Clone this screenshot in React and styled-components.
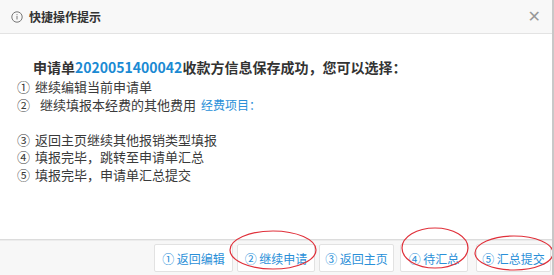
import React from 'react';
import styled, { createGlobalStyle } from 'styled-components';

const Global = createGlobalStyle`
  html, body { margin: 0; padding: 0; background: #fff; }
  body { font-family: "Microsoft YaHei", "Noto Sans CJK SC", "Noto Sans", sans-serif; }
`;

const Dialog = styled.div`
  position: relative;
  width: 554px;
  height: 275px;
  box-sizing: border-box;
  border-right: 2px solid #c8c8c8;
  display: flex;
  flex-direction: column;
  background: #fff;
  overflow: hidden;
`;

const Header = styled.div`
  height: 33px;
  flex: none;
  background: #f8f8f8;
  border-bottom: 1px solid #e3e3e3;
  display: flex;
  align-items: center;
  padding: 0 10px 0 11px;
  color: #333;
`;

const Title = styled.span`
  font-size: 12px;
  font-weight: bold;
  margin-left: 6px;
  flex: 1;
`;

const Close = styled.span`
  color: #999;
  font-size: 16px;
  font-family: "DejaVu Sans", sans-serif;
  line-height: 1;
  margin-right: 1px;
`;

const Body = styled.div`
  flex: 1;
  padding: 24px 0 0 17px;
  color: #3a3a3a;
`;

const Lead = styled.div`
  font-size: 14px;
  font-weight: bold;
  line-height: 19px;
  padding-left: 16px;
  margin-bottom: 1px;
  color: #333;
`;

const Num = styled.span`
  color: #1b8ad3;
`;

const Item = styled.div`
  font-size: 13px;
  line-height: 17.5px;
  height: 17.5px;
  display: flex;
  align-items: center;
`;

const Mark = styled.span`
  width: ${p => (p.$wide ? 23 : 18)}px;
  flex: none;
`;

const Link = styled.span`
  color: #2a90d8;
  font-size: 12px;
  margin-left: 5px;
`;

const Footer = styled.div`
  height: 32px;
  flex: none;
  border-top: 1px solid #dcdcdc;
  box-shadow: inset 0 1px 0 #ececec;
  background: #f7f7f7;
  display: flex;
  justify-content: flex-end;
  align-items: flex-end;
  padding: 0 1px 3px 0;
`;

const Button = styled.button`
  width: ${p => p.$w}px;
  margin-left: ${p => p.$gap}px;
  height: 28px;
  padding: 0;
  border: 1px solid #e2e2e2;
  background: #fff;
  color: #2a8fd8;
  font-family: inherit;
  font-size: 12px;
  border-radius: 2px;
  cursor: pointer;
`;

const Overlay = styled.svg`
  position: absolute;
  left: 0;
  top: 0;
  pointer-events: none;
`;

const InfoIcon = () => (
  <svg width="12" height="12" viewBox="0 0 12 12">
    <circle cx="6" cy="6" r="5.2" fill="none" stroke="#777" strokeWidth="1" />
    <rect x="5.5" y="5" width="1" height="3.5" fill="#777" />
    <rect x="5.5" y="3.2" width="1" height="1" fill="#777" />
  </svg>
);

const actions = [
  { label: '① 返回编辑', w: 79, gap: 0 },
  { label: '② 继续申请', w: 78, gap: 4 },
  { label: '③ 返回主页', w: 75, gap: 4 },
  { label: '④ 待汇总', w: 68, gap: 6 },
  { label: '⑤ 汇总提交', w: 75, gap: 8 },
];

export default function App() {
  return (
    <>
      <Global />
      <Dialog>
        <Header>
          <InfoIcon />
          <Title>快捷操作提示</Title>
          <Close>✕</Close>
        </Header>
        <Body>
          <Lead>
            申请单<Num>2020051400042</Num>收款方信息保存成功，您可以选择：
          </Lead>
          <Item><Mark>①</Mark>继续编辑当前申请单</Item>
          <Item><Mark $wide>②</Mark>继续填报本经费的其他费用<Link>经费项目：</Link></Item>
          <Item />
          <Item><Mark>③</Mark>返回主页继续其他报销类型填报</Item>
          <Item><Mark>④</Mark>填报完毕，跳转至申请单汇总</Item>
          <Item><Mark>⑤</Mark>填报完毕，申请单汇总提交</Item>
        </Body>
        <Footer>
          {actions.map(a => (
            <Button key={a.label} $w={a.w} $gap={a.gap}>{a.label}</Button>
          ))}
        </Footer>
        <Overlay width="554" height="275">
          <ellipse cx="273" cy="250" rx="43" ry="19" fill="none" stroke="#e0303a" strokeWidth="1.2" />
          <ellipse cx="435" cy="248" rx="33" ry="20" fill="none" stroke="#e0303a" strokeWidth="1.2" />
          <ellipse cx="514" cy="253" rx="39" ry="17" fill="none" stroke="#e0303a" strokeWidth="1.2" />
        </Overlay>
      </Dialog>
    </>
  );
}
